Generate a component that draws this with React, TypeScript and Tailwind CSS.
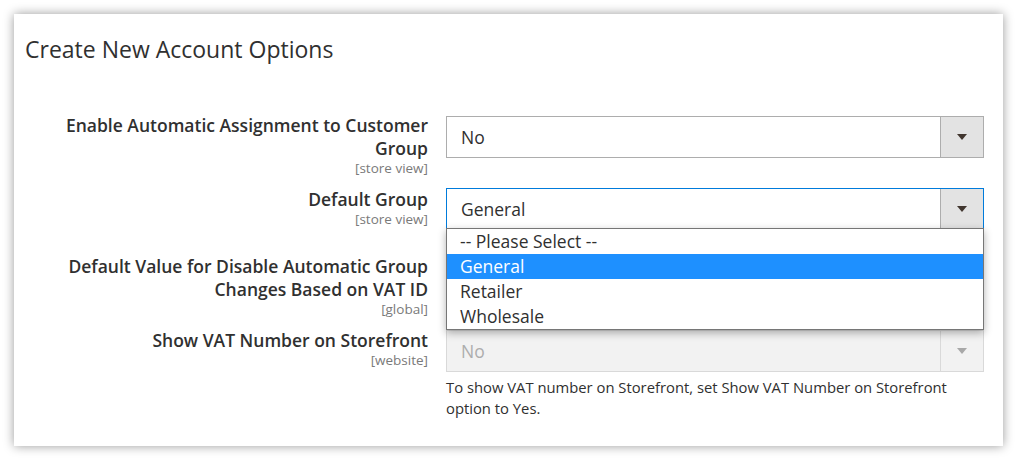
import React from "react";

function Arrow({ color }: { color: string }) {
  return (
    <svg width="10" height="6" viewBox="0 0 10 6" className="block">
      <polygon points="0,0 10,0 5,6" fill={color} />
    </svg>
  );
}

function Select({
  value,
  focused,
  disabled,
  children,
}: {
  value: string;
  focused?: boolean;
  disabled?: boolean;
  children?: React.ReactNode;
}) {
  const border = disabled
    ? "border-[#d9d9d9] bg-[#f2f2f2]"
    : focused
    ? "border-[#007bdb] bg-white"
    : "border-[#adadad] bg-white";
  return (
    <div className="relative h-[42px] w-[538px]">
      <div className={`flex h-[42px] w-[538px] border ${border}`}>
        <div
          className={`flex-1 flex items-center pl-[14px] text-[17.5px] ${
            disabled ? "text-[#adadad]" : "text-[#303030]"
          }`}
        >
          {value}
        </div>
        <div
          className={`w-[43px] flex items-center justify-center border-l ${
            disabled ? "border-[#d9d9d9] bg-[#f2f2f2]" : "border-[#adadad] bg-[#e3e3e3]"
          }`}
        >
          <Arrow color={disabled ? "#a8a8a8" : "#41362f"} />
        </div>
      </div>
      {children}
    </div>
  );
}

function Label({ lines, scope, top }: { lines: string[]; scope: string; top: string }) {
  return (
    <div className={`text-right ${top}`}>
      {lines.map((l) => (
        <div key={l} className="text-[17.5px] leading-[23px] font-semibold text-[#303030] whitespace-nowrap">
          {l}
        </div>
      ))}
      <div className="text-[13.5px] leading-[17px] text-[#7a7a7a] whitespace-nowrap">{scope}</div>
    </div>
  );
}

export default function App() {
  return (
    <div className="w-[1017px] h-[460px] bg-white p-[14px] font-['Open_Sans',sans-serif]">
      <div className="relative w-[989px] h-[432px] bg-white shadow-[0_0_10px_rgba(0,0,0,0.4)] pt-[21px]">
        <h2 className="pl-[11px] text-[23px] leading-[28px] font-normal text-[#303030]">
          Create New Account Options
        </h2>
        <div className="mt-[53px]">
          <div className="grid grid-cols-[414px_538px] gap-x-[18px] h-[72px]">
            <Label
              lines={["Enable Automatic Assignment to Customer", "Group"]}
              scope="[store view]"
              top="-mt-[2px]"
            />
            <Select value="No" />
          </div>
          <div className="relative z-10 grid grid-cols-[414px_538px] gap-x-[18px] h-[69px]">
            <Label lines={["Default Group"]} scope="[store view]" top="mt-0" />
            <Select value="General" focused>
              <div className="absolute left-0 top-[40px] w-[538px] border border-[#767676] bg-white shadow-[0_3px_8px_rgba(0,0,0,0.3)]">
                <div className="h-[25px] leading-[25px] pl-[13px] text-[17.5px] text-[#303030]">
                  -- Please Select --
                </div>
                <div className="h-[25px] leading-[25px] pl-[13px] text-[17.5px] text-white bg-[#1e90ff]">
                  General
                </div>
                <div className="h-[25px] leading-[25px] pl-[13px] text-[17.5px] text-[#303030]">
                  Retailer
                </div>
                <div className="h-[25px] leading-[25px] pl-[13px] text-[17.5px] text-[#303030]">
                  Wholesale
                </div>
              </div>
            </Select>
          </div>
          <div className="grid grid-cols-[414px_538px] gap-x-[18px] h-[73px]">
            <Label
              lines={["Default Value for Disable Automatic Group", "Changes Based on VAT ID"]}
              scope="[global]"
              top="-mt-[2px]"
            />
            <Select value="" />
          </div>
          <div className="grid grid-cols-[414px_538px] gap-x-[18px]">
            <Label lines={["Show VAT Number on Storefront"]} scope="[website]" top="-mt-[1px]" />
            <div>
              <Select value="No" disabled />
              <p className="mt-[5px] text-[14.8px] leading-[21px] text-[#303030]">
                To show VAT number on Storefront, set Show VAT Number on Storefront
                <br />
                option to Yes.
              </p>
            </div>
          </div>
        </div>
      </div>
    </div>
  );
}
